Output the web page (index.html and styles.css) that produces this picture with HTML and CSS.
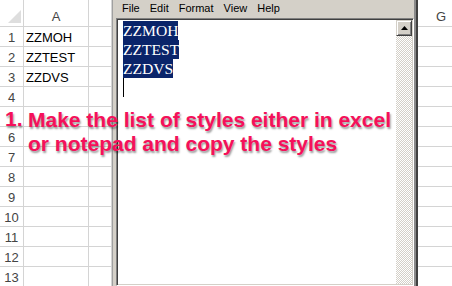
FILE: index.html
```html
<!DOCTYPE html>
<html>
<head>
<meta charset="utf-8">
<link rel="stylesheet" href="styles.css">
</head>
<body>
<div class="screen">
  <div class="sheet sheet-left">
    <div class="cell corner"><span class="tri"></span></div>
    <div class="cell colhead">A</div>
    <div class="cell colhead"></div>

    <div class="cell rowhead">1</div><div class="cell data">ZZMOH</div><div class="cell"></div>
    <div class="cell rowhead">2</div><div class="cell data">ZZTEST</div><div class="cell"></div>
    <div class="cell rowhead">3</div><div class="cell data">ZZDVS</div><div class="cell"></div>
    <div class="cell rowhead">4</div><div class="cell"></div><div class="cell"></div>
    <div class="cell rowhead"></div><div class="cell"></div><div class="cell"></div>
    <div class="cell rowhead">6</div><div class="cell"></div><div class="cell"></div>
    <div class="cell rowhead">7</div><div class="cell"></div><div class="cell"></div>
    <div class="cell rowhead">8</div><div class="cell"></div><div class="cell"></div>
    <div class="cell rowhead">9</div><div class="cell"></div><div class="cell"></div>
    <div class="cell rowhead">10</div><div class="cell"></div><div class="cell"></div>
    <div class="cell rowhead">11</div><div class="cell"></div><div class="cell"></div>
    <div class="cell rowhead">12</div><div class="cell"></div><div class="cell"></div>
    <div class="cell rowhead">13</div><div class="cell"></div><div class="cell"></div>
  </div>

  <div class="notepad">
    <div class="menubar">
      <span>File</span><span>Edit</span><span>Format</span><span>View</span><span>Help</span>
    </div>
    <div class="editbox">
      <div class="textarea">
        <div class="sel">ZZMOH</div>
        <div class="sel">ZZTEST</div>
        <div class="sel">ZZDVS</div>
        <div class="caret"></div>
      </div>
      <div class="vscroll">
        <div class="upbtn">
          <svg width="7" height="4" viewBox="0 0 7 4"><polygon points="3.5,0 7,4 0,4" fill="#000"/></svg>
        </div>
        <div class="track"></div>
      </div>
    </div>
  </div>

  <div class="sheet sheet-right">
    <div class="cell colhead colg">G</div>
    <div class="cell"></div><div class="cell"></div><div class="cell"></div><div class="cell"></div>
    <div class="cell"></div><div class="cell"></div><div class="cell"></div><div class="cell"></div>
    <div class="cell"></div><div class="cell"></div><div class="cell"></div><div class="cell"></div>
    <div class="cell"></div>
  </div>

  <div class="note">
    <span class="num">1.</span>
    <span class="msg">Make the list of styles either in excel<br>or notepad and copy the styles</span>
  </div>
</div>
</body>
</html>
```

FILE: styles.css
```css
* { box-sizing: border-box; }
html, body { margin: 0; padding: 0; background: #fff; }
.screen {
  position: relative;
  width: 452px;
  height: 286px;
  overflow: hidden;
  display: flex;
  font-family: "Liberation Sans", Arial, sans-serif;
}

/* spreadsheet */
.sheet {
  display: grid;
  grid-template-rows: 27px repeat(13, 20px);
  background: #fff;
  flex: none;
}
.sheet-left { width: 112px; grid-template-columns: 24px 65px 23px; }
.sheet-right { width: 34px; grid-template-columns: 34px; }
.cell {
  border-right: 1px solid #d4d4d4;
  border-bottom: 1px solid #d4d4d4;
  font-size: 13px;
  line-height: 17px;
  padding-top: 2px;
  color: #000;
  white-space: nowrap;
  overflow: hidden;
}
.sheet-right .cell { border-right: none; }
.corner { position: relative; }
.tri {
  position: absolute;
  left: 8px;
  top: 10px;
  width: 13px;
  height: 13px;
  background: #dedede;
  clip-path: polygon(100% 0, 100% 100%, 0 100%);
}
.colhead {
  color: #444;
  text-align: center;
  padding-top: 9px;
  line-height: 15px;
}
.colg { text-align: left; padding-left: 18px; }
.rowhead { color: #444; text-align: center; }
.data { padding-left: 2px; }

/* notepad */
.notepad {
  flex: none;
  width: 306px;
  display: flex;
  flex-direction: column;
  background: #d4d0c8;
  border-left: 1px solid #a0a0a0;
  padding-left: 3px;
  border-right: 2px solid #404040;
  padding-right: 2px;
  box-shadow: inset -2px 0 0 #8a8a8a;
}
.menubar {
  height: 18px;
  display: flex;
  gap: 10px;
  padding-left: 6px;
  font-size: 11px;
  line-height: 17px;
  color: #000;
}
.editbox {
  flex: 1;
  display: flex;
  background: #fff;
  border: 1px solid;
  border-color: #808080 #fff #fff #808080;
  padding: 1px;
  box-shadow: inset 1px 1px 0 #404040, inset -1px -1px 0 #d4d0c8;
}
.textarea {
  flex: 1;
  background: #fff;
  padding: 1px 0 0 5px;
  font-family: "Liberation Serif", "Times New Roman", serif;
  font-size: 15.6px;
  line-height: 19px;
}
.sel {
  width: fit-content;
  background: #0a246a;
  color: #fff;
}
.caret {
  width: 1px;
  height: 19px;
  background: #000;
}
.vscroll {
  width: 16px;
  display: flex;
  flex-direction: column;
}
.upbtn {
  height: 16px;
  background: #d4d0c8;
  border: 1px solid;
  border-color: #d4d0c8 #404040 #404040 #d4d0c8;
  box-shadow: inset 1px 1px 0 #fff, inset -1px -1px 0 #808080;
  display: flex;
  align-items: center;
  justify-content: center;
}
.upbtn svg { display: block; }
.track {
  flex: 1;
  background: repeating-conic-gradient(#d4d0c8 0 25%, #fff 0 50%) 0 0 / 2px 2px;
}

/* annotation */
.note {
  position: absolute;
  left: 5px;
  top: 108px;
  display: flex;
  font-family: "Liberation Sans", Arial, sans-serif;
  font-weight: bold;
  font-size: 21px;
  line-height: 24px;
  color: #f5105a;
  text-shadow: 1px 2px 2px rgba(0, 0, 0, 0.4);
  white-space: nowrap;
}
.num { width: 23px; margin-top: -1px; }
```
